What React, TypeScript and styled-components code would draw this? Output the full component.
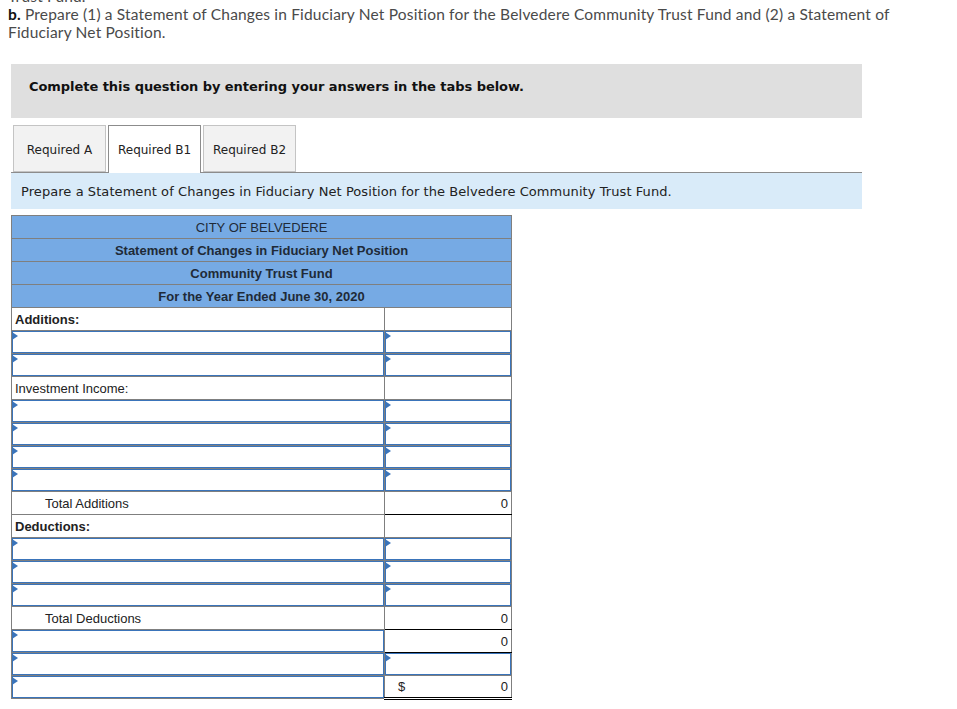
import React from "react";
import styled, { createGlobalStyle } from "styled-components";

const GlobalStyle = createGlobalStyle`
  html, body {
    margin: 0;
    padding: 0;
    background: #fff;
    overflow: hidden;
  }
`;

const Page = styled.div`
  width: 957px;
  height: 709px;
  overflow: hidden;
  padding-left: 8px;
  box-sizing: border-box;
`;

const Question = styled.p`
  margin: -13px 0 0;
  width: 900px;
  font-family: "Lato", "Liberation Sans", sans-serif;
  font-size: 15.5px;
  letter-spacing: 0.175px;
  line-height: 18px;
  color: #4a4a4a;
  & b {
    color: #111;
  }
`;

const Notice = styled.div`
  display: flex;
  align-items: center;
  margin: 23px 0 0 3px;
  width: 851px;
  height: 54px;
  padding: 0 0 9px 18px;
  box-sizing: border-box;
  background: #dfdfdf;
  font-family: "DejaVu Sans", sans-serif;
  font-size: 13px;
  letter-spacing: -0.05px;
  font-weight: 700;
  color: #111;
`;

const TabBar = styled.div`
  display: flex;
  gap: 2px;
  margin: 7px 0 0 3px;
  width: 851px;
  padding-left: 2px;
  box-sizing: border-box;
  border-bottom: 1px solid #8c8c8c;
`;

const Tab = styled.div<{ $active?: boolean }>`
  display: flex;
  align-items: center;
  justify-content: center;
  width: 93px;
  margin-bottom: ${(props) => (props.$active ? "-1px" : "0")};
  height: ${(props) => (props.$active ? "48px" : "47px")};
  padding-top: ${(props) => (props.$active ? "0" : "2px")};
  box-sizing: border-box;
  border: 1px solid ${(props) => (props.$active ? "#8c8c8c" : "#c4c4c4")};
  border-bottom: ${(props) => (props.$active ? "none" : "1px solid #c4c4c4")};
  background: ${(props) => (props.$active ? "#fff" : "#f2f2f2")};
  font-family: "DejaVu Sans", sans-serif;
  font-size: 12px;
  color: #222;
`;

const Instruction = styled.div`
  display: flex;
  align-items: center;
  margin-left: 3px;
  width: 851px;
  height: 36px;
  padding-left: 10px;
  box-sizing: border-box;
  background: #d9ebf9;
  font-family: "DejaVu Sans", sans-serif;
  font-size: 13px;
  letter-spacing: 0.07px;
  color: #222;
`;

const Sheet = styled.table`
  margin: 6px 0 0 3px;
  width: 500px;
  table-layout: fixed;
  border-collapse: collapse;
  font-family: "Liberation Sans", sans-serif;
  font-size: 13px;
  color: #222;
`;

const HeadCell = styled.th<{ $bold?: boolean }>`
  height: 22px;
  padding: 0;
  border: 1px solid #7f7f7f;
  background: #76aae4;
  text-align: center;
  font-weight: ${(props) => (props.$bold ? 700 : 400)};
  color: #1f2a38;
`;

const LabelCell = styled.td<{ $bold?: boolean; $indent?: boolean }>`
  height: 22px;
  padding: 0 0 0 ${(props) => (props.$indent ? "33px" : "3px")};
  border: 1px solid #7f7f7f;
  font-weight: ${(props) => (props.$bold ? 700 : 400)};
`;

const AmountCell = styled.td<{ $total?: boolean; $double?: boolean }>`
  position: relative;
  height: ${(props) => (props.$double ? "20px" : "22px")};
  padding: 0 3px;
  border: 1px solid #7f7f7f;
  border-bottom: ${(props) =>
    props.$double ? "3px double #000" : props.$total ? "1px solid #000" : "1px solid #7f7f7f"};
  text-align: right;
`;

const EntryCell = styled.td`
  height: 22px;
  padding: 0;
  border: 1px solid #7f7f7f;
`;

const Entry = styled.div`
  position: relative;
  height: 22px;
  box-sizing: border-box;
  border: 1px solid #3a74ba;
  &::before {
    content: "";
    position: absolute;
    left: -1px;
    top: 0;
    border-left: 6px solid #3a74ba;
    border-top: 4px solid transparent;
    border-bottom: 4px solid transparent;
  }
`;

const Currency = styled.span`
  position: absolute;
  left: 13px;
`;

type Row =
  | { kind: "label"; text: string; bold?: boolean; indent?: boolean; amount?: string; total?: boolean }
  | { kind: "entry"; amount?: string; currency?: boolean; double?: boolean };

const rows: Row[] = [
  { kind: "label", text: "Additions:", bold: true },
  { kind: "entry" },
  { kind: "entry" },
  { kind: "label", text: "Investment Income:" },
  { kind: "entry" },
  { kind: "entry" },
  { kind: "entry" },
  { kind: "entry" },
  { kind: "label", text: "Total Additions", indent: true, amount: "0", total: true },
  { kind: "label", text: "Deductions:", bold: true },
  { kind: "entry" },
  { kind: "entry" },
  { kind: "entry" },
  { kind: "label", text: "Total Deductions", indent: true, amount: "0", total: true },
  { kind: "entry", amount: "0" },
  { kind: "entry" },
  { kind: "entry", amount: "0", currency: true, double: true },
];

const titles = [
  { text: "CITY OF BELVEDERE", bold: false },
  { text: "Statement of Changes in Fiduciary Net Position", bold: true },
  { text: "Community Trust Fund", bold: true },
  { text: "For the Year Ended June 30, 2020", bold: true },
];

const App = () => {
  return (
    <Page>
      <GlobalStyle />
      <Question>
        Trust Fund.
        <br />
        <b>b.</b> Prepare (1) a Statement of Changes in Fiduciary Net Position for the Belvedere
        Community Trust Fund and (2) a Statement of Fiduciary Net Position.
      </Question>
      <Notice>Complete this question by entering your answers in the tabs below.</Notice>
      <TabBar>
        <Tab>Required A</Tab>
        <Tab $active>Required B1</Tab>
        <Tab>Required B2</Tab>
      </TabBar>
      <Instruction>
        Prepare a Statement of Changes in Fiduciary Net Position for the Belvedere Community Trust
        Fund.
      </Instruction>
      <Sheet>
        <colgroup>
          <col style={{ width: 373 }} />
          <col style={{ width: 127 }} />
        </colgroup>
        <thead>
          {titles.map((title) => (
            <tr key={title.text}>
              <HeadCell colSpan={2} $bold={title.bold}>
                {title.text}
              </HeadCell>
            </tr>
          ))}
        </thead>
        <tbody>
          {rows.map((row, i) =>
            row.kind === "label" ? (
              <tr key={i}>
                <LabelCell $bold={row.bold} $indent={row.indent}>
                  {row.text}
                </LabelCell>
                <AmountCell $total={row.total}>{row.amount}</AmountCell>
              </tr>
            ) : (
              <tr key={i}>
                <EntryCell>
                  <Entry />
                </EntryCell>
                {row.amount ? (
                  <AmountCell $total $double={row.double}>
                    {row.currency && <Currency>$</Currency>}
                    {row.amount}
                  </AmountCell>
                ) : (
                  <EntryCell>
                    <Entry />
                  </EntryCell>
                )}
              </tr>
            )
          )}
        </tbody>
      </Sheet>
    </Page>
  );
};

export default App;
